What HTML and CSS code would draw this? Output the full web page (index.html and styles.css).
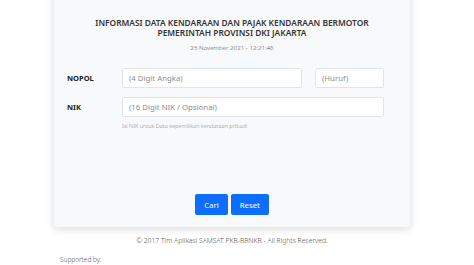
FILE: index.html
```html
<!DOCTYPE html>
<html lang="id">
<head>
    <meta charset="UTF-8">
    <meta name="viewport" content="width=device-width, initial-scale=1.0">
    <title>Info PKB DKI Jakarta</title>
    <link rel="stylesheet" href="styles.css">
</head>
<body>
    <div class="wrapper">
        <div class="card">
            <h1 class="title">INFORMASI DATA KENDARAAN DAN PAJAK KENDARAAN BERMOTOR<br>PEMERINTAH PROVINSI DKI JAKARTA</h1>
            <p class="date">25 November 2021 - 12:21:46</p>

            <form class="form">
                <label class="label" for="nopol">NOPOL</label>
                <input id="nopol" class="input" type="text" placeholder="(4 Digit Angka)">
                <input class="input" type="text" placeholder="(Huruf)">

                <label class="label" for="nik">NIK</label>
                <input id="nik" class="input wide" type="text" placeholder="(16 Digit NIK / Opsional)">
                <small class="help">Isi NIK untuk Data kepemilikan kendaraan pribadi</small>
            </form>

            <div class="actions">
                <button class="btn" type="button">Cari</button>
                <button class="btn" type="button">Reset</button>
            </div>
        </div>

        <p class="copyright">© 2017 Tim Aplikasi SAMSAT PKB-BBNKB - All Rights Reserved.</p>
    </div>

    <p class="supported">Supported by:</p>
</body>
</html>
```

FILE: styles.css
```css
body {
    margin: 0;
    background-color: #fff;
    font-family: "Noto Sans", "Open Sans", sans-serif;
    color: #333;
}
.wrapper {
    width: 356px;
    margin-left: 54px;
}
.card {
    margin-top: -10px;
    padding: 28px 26px 12px 13px;
    background-color: #f8f9fa;
    border-radius: 3px;
    box-shadow: 0 2px 8px rgba(0,0,0,0.15);
}
.title {
    margin: 0 0 0 13px;
    font-size: 8.4px;
    font-weight: 600;
    line-height: 10px;
    text-align: center;
    color: #333;
}
.date {
    margin: 6px 0 0 13px;
    font-size: 6.2px;
    font-weight: 300;
    line-height: 8px;
    text-align: center;
    color: #555;
}
.form {
    display: grid;
    grid-template-columns: 42px 180px 69px;
    column-gap: 13px;
    row-gap: 9px;
    align-items: center;
    margin-top: 16px;
}
.label {
    font-size: 7.5px;
    font-weight: 700;
    color: #222;
}
.input {
    box-sizing: border-box;
    height: 20px;
    padding: 0 6px;
    border: 1px solid #e2e5e8;
    border-radius: 2px;
    background-color: #fff;
    font-family: inherit;
    font-size: 7.8px;
    color: #333;
}
.input::placeholder {
    color: #8a8f94;
}
.wide {
    grid-column: 2 / 4;
}
.help {
    grid-column: 2 / 4;
    margin-top: -4px;
    font-size: 5.6px;
    font-weight: 300;
    color: #8a8f94;
}
.actions {
    display: flex;
    justify-content: center;
    gap: 3px;
    margin: 64px 0 0 13px;
}
.btn {
    height: 21px;
    padding: 0 9px;
    border: none;
    border-radius: 2px;
    background-color: #0d6efd;
    color: #fff;
    font-family: inherit;
    font-size: 7.8px;
}
.copyright {
    margin: 9px 0 0;
    font-size: 6.8px;
    font-weight: 300;
    text-align: center;
    color: #555;
}
.supported {
    margin: 10px 0 0 60px;
    font-size: 6.5px;
    line-height: 9px;
    font-weight: 300;
    color: #555;
}
```
